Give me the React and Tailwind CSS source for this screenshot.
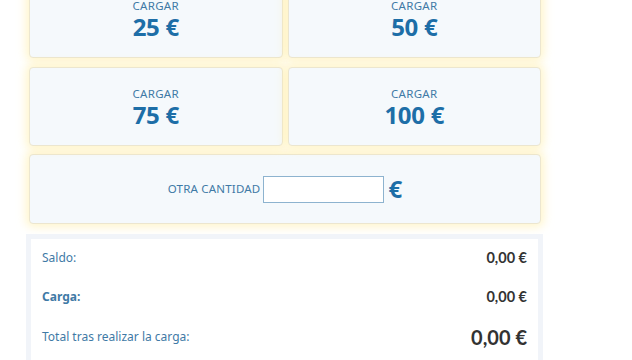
const AMOUNTS = [25, 50, 75, 100];

function AmountCard({ amount }) {
  return (
    <button
      type="button"
      className="flex h-[79px] flex-col items-center justify-center rounded-[4px] border border-[#ece6cf] bg-[#f5f9fc] shadow-[0_0_10px_3px_rgba(255,236,160,0.55)]"
    >
      <span className="text-[11.5px] leading-[14px] tracking-[0.3px] text-[#3f7aa6]">CARGAR</span>
      <span className="mt-[1px] text-[24px] font-bold leading-[25px] tracking-[-0.3px] text-[#1d6ea7]">
        {amount} €
      </span>
    </button>
  );
}

function SummaryRow({ label, value, bold, big }) {
  return (
    <div className="flex h-[39.5px] items-center justify-between">
      <span className={`text-[12px] text-[#3f7aa6] ${bold ? "font-bold" : ""}`}>{label}</span>
      <span
        className={`font-['Lato',sans-serif] font-bold text-[#333333] ${
          big ? "text-[20px]" : "text-[14.5px]"
        }`}
      >
        {value}
      </span>
    </div>
  );
}

export default function App() {
  return (
    <div className="h-[360px] w-[632px] overflow-hidden bg-white font-['Noto_Sans',sans-serif]">
      <div className="ml-[29px] mt-[-21px] w-[512px]">
        <div className="grid grid-cols-2 gap-x-[5px] gap-y-[9px]">
          {AMOUNTS.map((a) => (
            <AmountCard key={a} amount={a} />
          ))}
        </div>
        <div className="mt-[8px] flex h-[70px] items-center justify-center rounded-[4px] border border-[#ece6cf] bg-[#f5f9fc] shadow-[0_0_10px_3px_rgba(255,236,160,0.55)]">
          <span className="mr-[3px] text-[11.5px] tracking-[0.2px] text-[#3f7aa6]">OTRA CANTIDAD</span>
          <input
            type="text"
            className="h-[27px] w-[121px] border border-[#8db3cf] bg-white px-1 text-[13px] outline-none"
          />
          <span className="ml-[4px] text-[24px] font-bold leading-none text-[#1d6ea7]">€</span>
        </div>
      </div>
      <div className="ml-[26px] mt-[10px] w-[517px] border-[5px] border-b-0 border-[#f1f4f9] bg-white px-[11px] pb-[20px]">
        <div className="-mt-[1px]">
          <SummaryRow label="Saldo:" value="0,00 €" />
          <SummaryRow label="Carga:" value="0,00 €" bold />
          <SummaryRow label="Total tras realizar la carga:" value="0,00 €" big />
        </div>
      </div>
    </div>
  );
}
